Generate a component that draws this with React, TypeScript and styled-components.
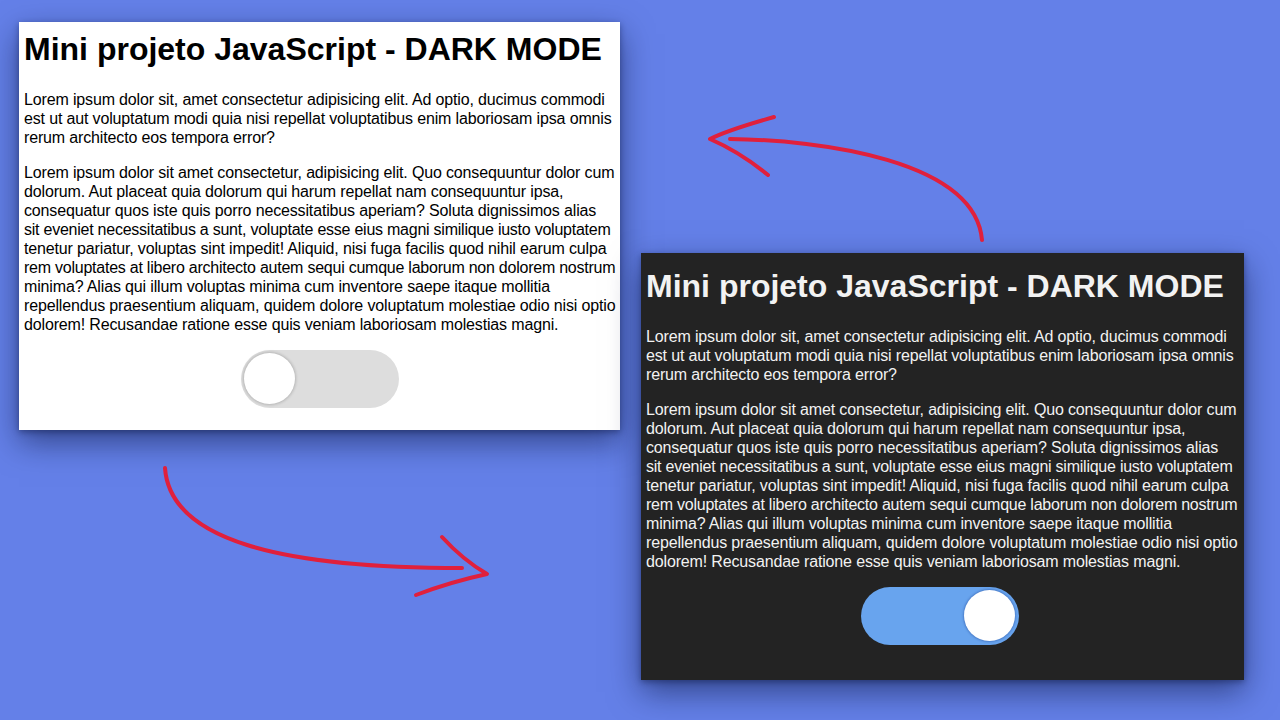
import React from "react";
import styled, { createGlobalStyle } from "styled-components";

const Global = createGlobalStyle`
  html, body { margin: 0; padding: 0; }
  body {
    width: 1280px;
    height: 720px;
    overflow: hidden;
    background: #6480e8;
    font-family: "Liberation Sans", Arial, sans-serif;
  }
`;

const Canvas = styled.div`
  position: relative;
  width: 1280px;
  height: 720px;
  background: #6480e8;
  overflow: hidden;
`;

const Card = styled.section<{ $dark?: boolean; $x: number; $y: number; $w: number; $pt: number; $pb: number }>`
  position: absolute;
  left: ${(p) => p.$x}px;
  top: ${(p) => p.$y}px;
  width: ${(p) => p.$w}px;
  box-sizing: border-box;
  padding: ${(p) => p.$pt}px 5px ${(p) => p.$pb}px 5px;
  background: ${(p) => (p.$dark ? "#232323" : "#ffffff")};
  color: ${(p) => (p.$dark ? "#f2f2f2" : "#000000")};
  box-shadow: 0 12px 30px rgba(10, 20, 60, 0.55), 0 2px 6px rgba(10, 20, 60, 0.4);
  display: flex;
  flex-direction: column;
`;

const Title = styled.h1`
  margin: 0 0 22px 0;
  font-size: 32px;
  line-height: 37px;
  font-weight: 700;
  white-space: nowrap;
`;

const Para = styled.p`
  margin: 0 0 16px 0;
  font-size: 16px;
  line-height: 19px;
  letter-spacing: -0.15px;
`;

const Line = styled.span<{ $tight?: boolean }>`
  display: block;
  white-space: nowrap;
  letter-spacing: ${(p) => (p.$tight ? "-0.24px" : "inherit")};
`;

const Toggle = styled.div<{ $on?: boolean }>`
  align-self: center;
  position: relative;
  width: 158px;
  height: 58px;
  margin-right: ${(p) => (p.$on ? "6px" : "0")};
  border-radius: 29px;
  background: ${(p) => (p.$on ? "#68a4ee" : "#dddddd")};
`;

const Knob = styled.span<{ $on?: boolean }>`
  position: absolute;
  top: 3px;
  left: ${(p) => (p.$on ? "103px" : "3px")};
  width: 51px;
  height: 51px;
  border-radius: 50%;
  background: #ffffff;
  box-shadow: ${(p) => (p.$on ? "0 0 2px 1px rgba(40,80,160,0.45)" : "0 0 3px 1px rgba(0,0,0,0.18)")};
`;

const ArrowLayer = styled.svg`
  position: absolute;
  left: 0;
  top: 0;
  width: 1280px;
  height: 720px;
  pointer-events: none;
`;

type L = { t: string; tight?: boolean };

const P1: L[] = [
  { t: "Lorem ipsum dolor sit, amet consectetur adipisicing elit. Ad optio, ducimus commodi" },
  { t: "est ut aut voluptatum modi quia nisi repellat voluptatibus enim laboriosam ipsa omnis" },
  { t: "rerum architecto eos tempora error?" },
];
const P2: L[] = [
  { t: "Lorem ipsum dolor sit amet consectetur, adipisicing elit. Quo consequuntur dolor cum" },
  { t: "dolorum. Aut placeat quia dolorum qui harum repellat nam consequuntur ipsa," },
  { t: "consequatur quos iste quis porro necessitatibus aperiam? Soluta dignissimos alias" },
  { t: "sit eveniet necessitatibus a sunt, voluptate esse eius magni similique iusto voluptatem", tight: true },
  { t: "tenetur pariatur, voluptas sint impedit! Aliquid, nisi fuga facilis quod nihil earum culpa" },
  { t: "rem voluptates at libero architecto autem sequi cumque laborum non dolorem nostrum", tight: true },
  { t: "minima? Alias qui illum voluptas minima cum inventore saepe itaque mollitia" },
  { t: "repellendus praesentium aliquam, quidem dolore voluptatum molestiae odio nisi optio" },
  { t: "dolorem! Recusandae ratione esse quis veniam laboriosam molestias magni." },
];

const Paragraph: React.FC<{ lines: L[] }> = ({ lines }) => (
  <Para>
    {lines.map((l, i) => (
      <Line key={i} $tight={l.tight}>
        {l.t}
      </Line>
    ))}
  </Para>
);

const Content: React.FC<{ on?: boolean }> = ({ on }) => (
  <>
    <Title>Mini projeto JavaScript - DARK MODE</Title>
    <Paragraph lines={P1} />
    <Paragraph lines={P2} />
    <Toggle $on={on}>
      <Knob $on={on} />
    </Toggle>
  </>
);

export default function App() {
  return (
    <>
      <Global />
      <Canvas>
        <Card $x={19} $y={22} $w={601} $pt={9} $pb={22}>
          <Content />
        </Card>
        <Card $dark $x={641} $y={253} $w={603} $pt={15} $pb={35}>
          <Content on />
        </Card>
        <ArrowLayer viewBox="0 0 1280 720">
          <g fill="none" stroke="#e0203c" strokeWidth={4} strokeLinecap="round" strokeLinejoin="round">
            <path d="M730 139 C 820 140 975 160 982 240" />
            <path d="M774 117 Q 728 130 710 139 Q 740 152 768 175" />
            <path d="M165 468 C 170 540 280 568 462 568" />
            <path d="M442 537 Q 463 560 487 574 Q 450 582 416 595" />
          </g>
        </ArrowLayer>
      </Canvas>
    </>
  );
}
